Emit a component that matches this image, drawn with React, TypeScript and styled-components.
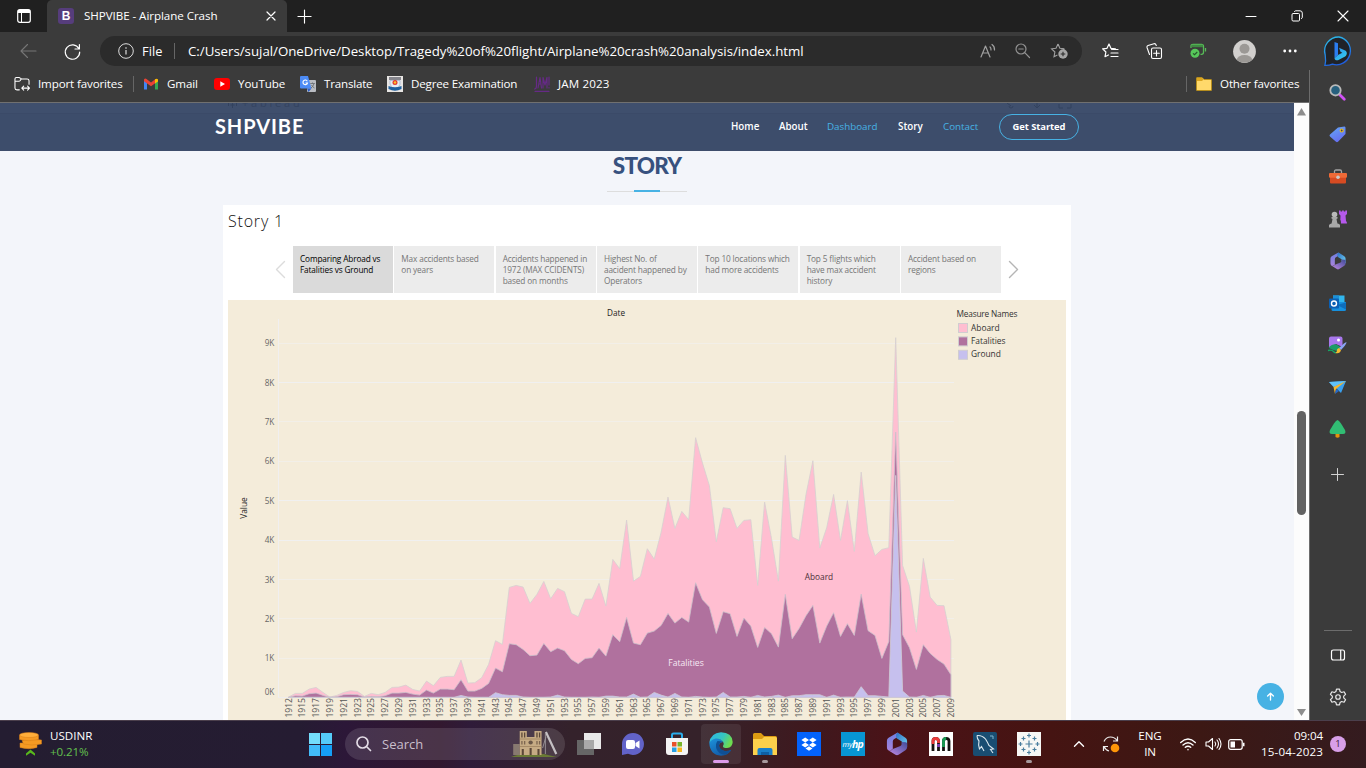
import React from 'react';
import styled, { createGlobalStyle } from 'styled-components';

const GlobalStyle = createGlobalStyle`
  * { box-sizing: border-box; }
  html, body { margin: 0; padding: 0; }
  body { width: 1366px; height: 768px; overflow: hidden; font-family: "Open Sans", "Noto Sans", sans-serif; }
  svg { display: block; flex: none; overflow: visible; }
`;

/* ---------- chart data, years 1912-2009 (1913 has no record) ---------- */
const ABOARD = [
  1, 12, 12, 25, 30, 15, 1, 6, 15, 20, 18, 3, 12, 8, 15, 30, 31, 37, 24, 19, 49, 35, 60, 63, 63, 112, 43, 44, 59, 99,
  170, 159, 330, 336, 331, 282, 309, 348, 296, 327, 317, 252, 242, 295, 295, 342, 274, 414, 386, 532, 349, 363, 446,
  415, 495, 601, 507, 558, 533, 779, 703, 635, 467, 569, 566, 507, 531, 533, 336, 586, 477, 349, 726, 481, 471, 609,
  710, 448, 509, 609, 471, 590, 438, 676, 491, 425, 444, 449, 1079, 396, 333, 196, 417, 301, 276, 275, 174,
];
const FATALITIES = [
  0, 5, 4, 11, 13, 6, 0, 2, 8, 9, 8, 1, 3, 2, 5, 13, 13, 15, 10, 7, 22, 13, 25, 25, 23, 53, 19, 19, 27, 42, 88, 77, 161,
  158, 144, 125, 127, 162, 137, 148, 140, 114, 101, 117, 119, 148, 124, 188, 167, 240, 163, 158, 193, 199, 216, 252,
  223, 240, 226, 344, 293, 271, 192, 257, 251, 183, 238, 214, 150, 210, 191, 151, 309, 176, 207, 245, 276, 163, 214,
  254, 183, 221, 186, 310, 200, 186, 117, 168, 796, 188, 149, 84, 158, 132, 114, 100, 68,
];
const GROUND = [
  0, 0, 0, 0, 0, 0, 0, 0, 0, 0, 0, 0, 0, 0, 0, 0, 0, 0, 0, 0, 0, 0, 0, 0, 0, 6, 1, 0, 0, 0, 14, 8, 6, 6, 1, 0, 0, 0, 1,
  7, 1, 0, 0, 0, 1, 0, 4, 4, 1, 1, 10, 0, 1, 15, 7, 1, 12, 1, 0, 3, 1, 0, 1, 15, 1, 1, 3, 0, 6, 1, 3, 7, 0, 5, 5, 8, 8,
  8, 0, 7, 0, 1, 1, 32, 5, 5, 3, 1, 666, 19, 1, 0, 6, 0, 5, 6, 0,
];
const X0 = 60.5;
const STEP = 6.9;
const BASE = 397.4;
const px = (i: number) => X0 + i * STEP;

function areaPath(values: number[]) {
  const top = values.map((v, i) => `${px(i).toFixed(1)},${(BASE - v / 3).toFixed(1)}`).join(' L');
  return `M${px(0)},${BASE} L${top} L${px(values.length - 1).toFixed(1)},${BASE} Z`;
}
const YEARS = ['1912', ...Array.from({ length: 48 }, (_, k) => String(1915 + k * 2))];

/* ---------- window chrome ---------- */
const Screen = styled.div`
  width: 1366px; height: 768px; display: flex; flex-direction: column; background: #3b3b3b; color: #fff; overflow: hidden;
`;
const TitleBar = styled.div`height: 32px; display: flex; background: #202020; flex: none;`;
const Slot = styled.div<{ $w: number }>`
  width: ${p => p.$w}px; flex: none; display: flex; align-items: center; justify-content: center;
`;
const Tab = styled.div`
  width: 240px; background: #3b3b3b; border-radius: 5px 5px 0 0; display: flex; align-items: center; padding: 0 8px 0 11px;
`;
const Favicon = styled.div`
  width: 16px; height: 16px; border-radius: 3px; background: #563d7c; display: flex; align-items: center;
  justify-content: center; font: 700 12px/16px "Liberation Sans", sans-serif;
`;
const UiText = styled.span<{ $size?: number; $ls?: number; $color?: string }>`
  font-size: ${p => p.$size ?? 11.6}px; letter-spacing: ${p => p.$ls ?? -0.14}px; color: ${p => p.$color ?? '#fff'};
  white-space: nowrap; line-height: 16px;
`;
const TabTitle = styled(UiText)`margin-left: 10px; flex: 1;`;
const Spacer = styled.div`flex: 1;`;

const Toolbar = styled.div`height: 38px; display: flex; align-items: center; flex: none;`;
const Address = styled.div`
  width: 982px; height: 30px; border-radius: 15px; background: #2b2b2b; display: flex; align-items: center;
  padding: 0 3px 0 18px; flex: none;
`;
const FileLabel = styled(UiText)`width: 32px; margin-left: 8px;`;
const VLine = styled.div<{ $h: number; $ml?: number; $mr?: number }>`
  width: 1px; height: ${p => p.$h}px; background: #666; margin-left: ${p => p.$ml ?? 0}px; margin-right: ${p => p.$mr ?? 0}px;
`;

const Body = styled.div`flex: 1; display: flex; min-height: 0;`;
const Main = styled.div`width: 1309px; display: flex; flex-direction: column; flex: none;`;
const Favorites = styled.div`
  height: 33px; display: flex; align-items: center; padding: 0 0 4px 14px; border-bottom: 1px solid #707070; flex: none;
`;
const Bookmark = styled.div<{ $w: number }>`width: ${p => p.$w}px; display: flex; align-items: center; gap: 8px; flex: none;`;

/* ---------- web page ---------- */
const Viewport = styled.div`flex: 1; display: flex; min-height: 0;`;
const Page = styled.div`
  width: 1294px; background: #f3f5fa; display: flex; flex-direction: column; position: relative; overflow: hidden;
`;
const Nav = styled.header`
  height: 48px; background: linear-gradient(#3f4f6d 0 10px, #3b4a68 10px 11px, #3d4d6b 11px); display: flex;
  align-items: center; padding: 0 215px; flex: none; position: relative;
`;
const Ghost = styled.div`
  position: absolute; left: 0; top: 0; width: 100%; height: 6px; overflow: hidden; color: #33425e;
`;
const GhostText = styled.div`
  margin: -8px 0 0 242px; font-size: 11px; line-height: 15px; letter-spacing: 2.8px; opacity: 0.85;
`;
const GhostIcons = styled.svg<{ $x: number }>`position: absolute; left: ${p => p.$x}px; top: 0;`;
const Brand = styled.div`font: 700 20px/24px Lato, sans-serif; letter-spacing: 0.9px; width: 516px; padding-bottom: 3px;`;
const NavLink = styled.a<{ $w: number; $active?: boolean }>`
  width: ${p => p.$w}px; font-size: 9.8px; font-weight: ${p => (p.$active ? 500 : 600)}; line-height: 14px;
  color: ${p => (p.$active ? '#47b2e4' : '#fff')}; white-space: nowrap; flex: none; padding-bottom: 0;
`;
const StartButton = styled.a`
  width: 80px; height: 26px; border: 1.4px solid #47b2e4; border-radius: 13px; flex: none; font-size: 9.4px;
  font-weight: 700; line-height: 24px; text-align: center; white-space: nowrap; letter-spacing: -0.05px;
`;
const Heading = styled.h2`
  margin: 0; height: 39px; font: 900 22.5px/30px Lato, sans-serif; color: #37517e; text-align: center; letter-spacing: -0.8px;
  flex: none;
`;
const Underline = styled.div`
  width: 80px; height: 2px; margin: 0 auto; display: flex; justify-content: center;
  background: linear-gradient(transparent 50%, #dddddd 50%); flex: none;
`;
const Accent = styled.div`width: 26px; height: 2px; background: #47b2e4;`;
const Card = styled.section`
  width: 848px; flex: 1; margin: 13px 0 0 223px; padding: 0 5px; background: #fff; display: flex; flex-direction: column;
  font-family: "Open Sans", "Noto Sans", sans-serif;
`;
const StoryTitle = styled.div`height: 41px; font-size: 16px; line-height: 33px; color: #111; font-weight: 300; letter-spacing: 0.8px; flex: none;`;
const Points = styled.div`height: 47px; display: flex; align-items: stretch; flex: none;`;
const Arrow = styled.div<{ $left?: boolean }>`
  width: ${p => (p.$left ? 65 : 17)}px; display: flex; align-items: center; justify-content: flex-end;
`;
const PointList = styled.div`display: flex; gap: 1.33px;`;
const Point = styled.div<{ $on?: boolean }>`
  width: 100px; padding: 7px 0 0 7px; font-size: 8.25px; line-height: 11px; white-space: pre; letter-spacing: -0.14px;
  background: ${p => (p.$on ? '#dadada' : '#ececec')}; color: ${p => (p.$on ? '#000' : '#767676')};
`;
const Chart = styled.svg`margin-top: 7px; background: #f4ecda; font-family: "Open Sans", sans-serif;`;
const ToTop = styled.div`
  position: absolute; right: 10px; bottom: 10px; width: 27px; height: 27px; border-radius: 50%; background: #47b2e4;
  display: flex; align-items: center; justify-content: center;
`;
const ScrollTrack = styled.div`width: 15px; background: #fcfcfc; display: flex; flex-direction: column; align-items: center; padding-top: 5px;`;
const Thumb = styled.div`width: 9px; height: 104px; border-radius: 5px; background: #626262; margin: 295px 0 0;`;

const Side = styled.aside`
  width: 57px; border-left: 1px solid #6c6c6c; display: flex; flex-direction: column; align-items: center; padding: 1px 1px 0 0;
`;
const SideItem = styled.div<{ $h?: number }>`height: ${p => p.$h ?? 42}px; display: flex; align-items: center; flex: none;`;
const SideRule = styled.div`width: 28px; height: 1px; background: #6c6c6c;`;

/* ---------- taskbar ---------- */
const Taskbar = styled.footer`
  height: 48px; flex: none; display: flex; align-items: center; border-top: 1px solid #4b3f4c; padding-bottom: 1px;
  background: linear-gradient(90deg, #241d31 0, #251c32 300px, #2c1738 345px, #32182f 440px, #2f1b39 470px, #34222b 570px,
    #35222a 700px, #40181d 820px, #4b1217 900px, #451412 1050px, #3c1814 1200px, #341b1f 1366px);
`;
const Widget = styled.div`width: 309px; padding-left: 19px; display: flex; align-items: center; gap: 8px; flex: none;`;
const Stack = styled.div<{ $align?: string }>`display: flex; flex-direction: column; align-items: ${p => p.$align ?? 'flex-start'};`;
const Start = styled.div`width: 23px; height: 23px; display: grid; grid-template-columns: 1fr 1fr; gap: 1px; flex: none;`;
const Pane = styled.div<{ $c: string }>`background: ${p => p.$c};`;
const SearchBox = styled.div`
  width: 220px; height: 32px; margin: 0 2px 0 13px; border-radius: 16px; background: rgba(255, 255, 255, 0.12);
  display: flex; align-items: center; padding: 0 6px 0 11px; gap: 10px; flex: none;
`;
const AppSlot = styled.div<{ $active?: boolean }>`
  width: 40px; height: 40px; margin: 0 2px; border-radius: 4px; display: flex; align-items: center; justify-content: center;
  flex: none; position: relative; background: ${p => (p.$active ? 'rgba(255,255,255,0.08)' : 'transparent')};
`;
const Dot = styled.i<{ $w: number; $c: string }>`
  position: absolute; bottom: 1px; left: calc(50% - ${p => p.$w / 2}px); width: ${p => p.$w}px; height: 3px;
  border-radius: 2px; background: ${p => p.$c};
`;
const Badge = styled.div`
  width: 16px; height: 16px; border-radius: 50%; background: #d89fe8; color: #3a2040; font-size: 9.5px; line-height: 16px;
  text-align: center; margin-left: 7px; flex: none;
`;
const Clock = styled(Stack)`width: 71px; white-space: nowrap; flex: none;`;

/* ---------- icons ---------- */
const Line = ({ d, s = 16, c = '#fff', w = 1.2, vb = 16 }: { d: string; s?: number; c?: string; w?: number; vb?: number }) => (
  <svg width={s} height={s} viewBox={`0 0 ${vb} ${vb}`} fill="none" stroke={c} strokeWidth={w} strokeLinecap="round" strokeLinejoin="round">
    <path d={d} />
  </svg>
);
const STAR = 'M7 1 L8.9 5.3 L13.4 5.8 M7 1 L5 5.3 L0.6 5.8 L3.9 9 L3 13.7 L6.4 12';

const BingIcon = () => (
  <svg width="30" height="31" viewBox="0 0 30 31">
    <defs>
      <linearGradient id="bi" x1="0" y1="0" x2="0.4" y2="1"><stop offset="0" stopColor="#2cc3ea" /><stop offset="1" stopColor="#1f5fe0" /></linearGradient>
      <linearGradient id="bb" x1="0" y1="0" x2="1" y2="1"><stop offset="0" stopColor="#2d8cf0" /><stop offset="1" stopColor="#35d5ee" /></linearGradient>
    </defs>
    <path d="M15 1a14 14 0 1 1-6.5 27.2C6.500 29 4 29.600 0.900 29.400C1.800 26.500 1.800 23 1.200 19A14 14 0 0 1 15 1Z" fill="#202329" stroke="url(#bi)" strokeWidth="1.3" />
    <path d="M10.500 6l3.500 1.300v11.700l-3.500 3Z" fill="#2b7cf0" />
    <path d="M10.500 22l3.500-3 4.300-2.300-1.800-.9-1.500-4 6.700 3c1.800 1.800 1.300 4.500-.6 5.700L14 24.200c-1.700.6-3.500-.4-3.500-2.200Z" fill="url(#bb)" />
  </svg>
);
const M365 = ({ s = 18 }: { s?: number }) => (
  <svg width={s} height={s} viewBox="0 0 20 20">
    <defs>
      <linearGradient id="m1" x1="0" y1="0" x2="0" y2="1"><stop stopColor="#6f7fe0" /><stop offset="1" stopColor="#a883dc" /></linearGradient>
      <linearGradient id="m2" x1="0" y1="0" x2="1" y2="1"><stop stopColor="#2f6fc4" /><stop offset="1" stopColor="#6fd3f2" /></linearGradient>
      <linearGradient id="m3" x1="1" y1="0" x2="0" y2="1"><stop stopColor="#3f4a98" /><stop offset="1" stopColor="#c48ce6" /></linearGradient>
    </defs>
    <path d="M10.500 0.500L3 4.700Q1.600 5.600 1.600 7.200V12.800Q1.600 15.600 4.200 15.600L6.500 14.200V8Q6.500 6.600 7.700 5.900L11 4Z" fill="url(#m1)" />
    <path d="M10.500 0.500Q9 1.700 9.200 3.700Q9.300 5 10.300 5.700L14 8V10.500L18.400 12.500V7.200Q18.400 5.600 17 4.700L11.500 1Z" fill="url(#m2)" />
    <path d="M18.400 9.500V12.800Q18.400 14.400 17 15.200L11.300 19Q10 19.800 8.700 19L3 15.400Q5 15.900 6.500 14.200L12.800 11.600Q14 11 14 9.700V8.300Q18.400 8.300 18.400 9.500Z" fill="url(#m3)" />
  </svg>
);

const Legend = [['Aboard', '#ffbed1'], ['Fatalities', '#b0719e'], ['Ground', '#c6c0ee']];
const POINTS = [
  'Comparing Abroad vs\nFatalities vs Ground', 'Max accidents based\non years', 'Accidents happened in\n1972 (MAX CCIDENTS)\nbased on months',
  'Highest No. of\naacident happened by\nOperators', 'Top 10 locations which\nhad more accidents', 'Top 5 flights which\nhave max accident\nhistory',
  'Accident based on\nregions',
];
const gridY = (k: number) => Math.round(397.2 - k * 39.4);

function StoryChart() {
  return (
    <Chart width="838" height="420" viewBox="0 0 838 420">
      {Array.from({ length: 9 }, (_, k) => k + 1).map(k => (
        <g key={k}>
          <rect x="50" y={gridY(k)} width="676" height="1" fill={[4, 5, 8].includes(k) ? '#f0f0f0' : '#f2efe8'} />
          <text x="46" y={400.8 - k * 39.4} fontSize="8.2" textAnchor="end" fill="#666" letterSpacing="-0.2">{k}K</text>
        </g>
      ))}
      <text x="46" y="395.3" fontSize="8.2" textAnchor="end" fill="#666" letterSpacing="-0.2">0K</text>
      <rect x="50" y="19" width="1" height="379" fill="#f0eff0" />
      <rect x="50" y="397" width="676" height="1" fill="#eeecec" />
      <path d={areaPath(ABOARD)} fill="#ffbed1" stroke="#d6d0d1" strokeWidth="0.8" />
      <path d={areaPath(FATALITIES)} fill="#b0719e" stroke="#ccc2cb" strokeWidth="0.8" />
      <path d={areaPath(GROUND)} fill="#c6c0ee" stroke="#cfcbd4" strokeWidth="0.8" />
      {YEARS.map((y, k) => (
        <text key={y} transform={`translate(${px(k * 2) + 3},417.500) rotate(-90)`} fontSize="8.6" fill="#555" letterSpacing="-0.1">{y}</text>
      ))}
      <text x="388" y="16" fontSize="8.200" textAnchor="middle" fill="#222" fontWeight="500">Date</text>
      <text transform="translate(19,208) rotate(-90)" fontSize="8.400" textAnchor="middle" fill="#222" fontWeight="500">Value</text>
      <text x="591" y="279.500" fontSize="8.300" textAnchor="middle" fill="#4b3038">Aboard</text>
      <text x="458" y="365.500" fontSize="8.600" textAnchor="middle" fill="#f7e9f4">Fatalities</text>
      <text x="728.500" y="17" fontSize="8.300" fill="#333" fontWeight="500" letterSpacing="-0.18">Measure Names</text>
      {Legend.map(([name, color], k) => (
        <g key={name}>
          <rect x="730.500" y={23.5 + k * 13.4} width="9" height="9" fill={color} stroke="#d0cdd0" />
          <text x="743" y={31 + k * 13.2} fontSize="8.400" fill="#333" letterSpacing="-0.02">{name}</text>
        </g>
      ))}
    </Chart>
  );
}

function Chrome() {
  return (
    <>
      <TitleBar>
        <Slot $w={47}>
          <svg width="14" height="14" viewBox="0 0 14 14"><rect x="0.700" y="0.700" width="12.600" height="12.600" rx="2" fill="none" stroke="#fff" strokeWidth="1.200" /><path d="M1 1h12v3H1Z" fill="#fff" /><path d="M4.500 4v9" stroke="#fff" /></svg>
        </Slot>
        <Tab>
          <Favicon>B</Favicon>
          <TabTitle $ls={-0.06}>SHPVIBE - Airplane Crash</TabTitle>
          <Line d="M4 4l8 8M12 4l-8 8" s={16} w={1.2} />
        </Tab>
        <Slot $w={35}><Line d="M8 1v14M1 8h14" w={1.2} s={15} /></Slot>
        <Spacer />
        <Slot $w={46}><Line d="M3 8.500h10" w={1} /></Slot>
        <Slot $w={46}><Line d="M3 6.500q0-1 1-1h5.500q1 0 1 1V12q0 1-1 1H4q-1 0-1-1ZM5.500 3.500q.3-.7 1-.7h4.500q2.300 0 2.300 2.300v4.400q0 .8-.8 1" w={1} /></Slot>
        <Slot $w={46}><Line d="M3 3l10 10M13 3L3 13" w={1.1} /></Slot>
      </TitleBar>
      <Toolbar>
        <Slot $w={56}><Line d="M16 8H1M7.500 1.500L1 8l6.500 6.500" c="#767676" vb={17} s={17} w={1.1} /></Slot>
        <Slot $w={32}><Line d="M14.800 5.500A7.200 7.200 0 1 0 15.700 9M15.400 1.500V6H11" vb={17} s={17} w={1.2} /></Slot>
        <Slot $w={12} />
        <Address>
          <svg width="16" height="16" viewBox="0 0 16 16" fill="none" stroke="#ddd"><circle cx="8" cy="8" r="7.300" /><path d="M8 7v4.500M8 4.300v1.400" strokeWidth="1.200" /></svg>
          <FileLabel $size={12.8} $ls={0.05}>File</FileLabel>
          <VLine $h={16} $mr={13} />
          <UiText $size={13.3} $ls={-0.03}>C:/Users/sujal/OneDrive/Desktop/Tragedy%20of%20flight/Airplane%20crash%20analysis/index.html</UiText>
          <Spacer />
          <Slot $w={36}><Line d="M1 14L5.500 3L10 14M2.700 10h5.600M10 4q1.200 1 1 3M12 1.500q2.800 2 2.500 5.500" c="#a0a0a0" /></Slot>
          <Slot $w={34}><Line d="M11 6a5 5 0 1 1-10 0a5 5 0 0 1 10 0M10 9.800L14.500 14.500M3.800 6h4.400" c="#929292" /></Slot>
          <Slot $w={39}>
            <svg width="17" height="16" viewBox="0 0 17 16"><path d={STAR + 'M13.400 5.800L12 7.200'} fill="none" stroke="#a0a0a0" strokeWidth="1.100" /><circle cx="12" cy="11" r="4.700" fill="#a6a6a6" /><path d="M12 8.700v4.600M9.700 11h4.600" stroke="#2b2b2b" strokeWidth="1.100" /></svg>
          </Slot>
        </Address>
        <Slot $w={56}><Line d={STAR + 'M9.500 6.500h6.500M9 10h7M9 13.500h7'} s={17} vb={17} w={1.2} /></Slot>
        <Slot $w={32}><Line d="M5.500 6.500q0-1.500 1.500-1.500H14q1.500 0 1.500 1.500V14q0 1.500-1.500 1.500H7q-1.500 0-1.500-1.500ZM10.500 7.500v5.500M7.700 10.200h5.600M3.500 11.500L1 4.500Q.6 3 2 2.500L8 .7Q9.500.3 10.300 2.500" s={17} vb={17} w={1.1} /></Slot>
        <Slot $w={56}>
          <svg width="17" height="16" viewBox="0 0 17 16"><path d="M1 5V3Q1 1.300 3 1.300h8.500q2 0 2 2v6q0 2-2 2h-1M15.500 5v3.500" fill="none" stroke="#57b957" strokeWidth="1.300" /><path d="M1.500 1.800h11.500v2.400H1.500Z" fill="#3f8a42" /><circle cx="5" cy="10.200" r="4.500" fill="#57c75a" /><path d="M3 10.300l1.500 1.400L7.300 9" fill="none" stroke="#24552a" strokeWidth="1.100" /></svg>
        </Slot>
        <Slot $w={36}>
          <svg width="23" height="23" viewBox="0 0 23 23"><defs><clipPath id="av"><circle cx="11.500" cy="11.500" r="11.200" /></clipPath></defs><circle cx="11.500" cy="11.500" r="11.400" fill="#d2d0ce" /><circle cx="11.500" cy="8.700" r="5" fill="#9b9895" /><ellipse cx="11.500" cy="20" rx="7.700" ry="5" fill="#9b9895" clipPath="url(#av)" /></svg>
        </Slot>
        <Slot $w={56}><svg width="14" height="4" fill="#fff"><circle cx="1.700" cy="2" r="1.400" /><circle cx="7" cy="2" r="1.400" /><circle cx="12.300" cy="2" r="1.400" /></svg></Slot>
        <Slot $w={42}><BingIcon /></Slot>
      </Toolbar>
    </>
  );
}

function FavoritesBar() {
  return (
    <Favorites>
      <Bookmark $w={119}>
        <Line d="M5.500 14.300H3Q1 14.300 1 12.300V3Q1 1.500 2.500 1.500H5Q6 1.500 6.500 2.300Q7 3 8 3H13.500Q15.500 3 15.500 5V8.500M1 5.500H5Q6 5.500 6.500 4.500L7.500 3M8 12.500H16M10 10.500L8 12.500L10 14.500M14 10.500L16 12.500L14 14.500" w={1.1} vb={16.5} />
        <UiText>Import favorites</UiText>
      </Bookmark>
      <VLine $h={16} $mr={9} />
      <Bookmark $w={71}>
        <svg width="16" height="12" viewBox="0 0 16 12"><path d="M1 2v9.500h3V5Z" fill="#4285f4" /><path d="M12 5v6.500h3V2Z" fill="#34a853" /><path d="M1 1.500Q2 0 3.500 1L8 4.600 12.500 1 12.500 5 8 8.300 1 3.300Z" fill="#ea4335" /><path d="M12 1.200Q14 0 15 1.500V3.500L12 5.500Z" fill="#fbbc04" /></svg>
        <UiText>Gmail</UiText>
      </Bookmark>
      <Bookmark $w={86}>
        <svg width="16" height="12" viewBox="0 0 16 12"><rect width="16" height="12" rx="3" fill="#f00" /><path d="M6.300 3.300L11 6L6.300 8.700Z" fill="#fff" /></svg>
        <UiText $ls={-0.05}>YouTube</UiText>
      </Bookmark>
      <Bookmark $w={87}>
        <svg width="16" height="16" viewBox="0 0 16 16"><rect x="7" y="4" width="9" height="12" rx="1" fill="#b9bcc2" /><path d="M1 0H8L11.500 12.500H1Q0 12.500 0 11.500V1Q0 0 1 0Z" fill="#4c8bf5" /><path d="M7 12.500h4.500L8.500 16Z" fill="#2c5fc9" /><path d="M7.300 5.200A2.300 2.300 0 1 0 7.500 7H5.500" fill="none" stroke="#fff" strokeWidth="1.100" /><path d="M10.300 7.500h4.500M12.500 6.500v1M14 7.500q-.7 3-3 4.500M11.500 9q1 2 3 3" fill="none" stroke="#6b7076" strokeWidth="0.900" /></svg>
        <UiText $ls={-0.2}>Translate</UiText>
      </Bookmark>
      <Bookmark $w={147}>
        <svg width="16" height="16" viewBox="0 0 16 16"><rect width="16" height="16" fill="#e8e6e4" /><path d="M2 1h12v3H2Z" fill="#85858c" /><path d="M3 4.500h10v4Q12 12 8 13Q4 12 3 8Z" fill="#e3ecf4" stroke="#8ea2c9" strokeWidth="0.600" /><circle cx="8" cy="6.500" r="2.500" fill="#e23b2e" /><circle cx="8" cy="6.500" r="1.200" fill="#f9c22d" /><path d="M1.500 10Q8 12.500 14.500 10V13Q8 16.500 1.500 13Z" fill="#1d5f9e" /></svg>
        <UiText $ls={-0.17}>Degree Examination</UiText>
      </Bookmark>
      <Bookmark $w={90}>
        <Line d="M2.500 1v9q0 3-2 3M4 12L6 1.500L7.500 12M5 8h2M9 12V1.500L11 9L13 1.500V12M15 1v8M15 11.500v.5M1 15.300h14" c="#662a86" w={1.2} />
        <UiText $ls={0.15}>JAM 2023</UiText>
      </Bookmark>
      <Spacer />
      <VLine $h={16} $mr={9} />
      <Bookmark $w={113}>
        <svg width="16" height="14" viewBox="0 0 16 14"><path d="M.5 3V1.200Q.5.500 1.200.500H6L8 2.500H15q.5 0 .5.700V13q0 .5-.5.500H1q-.5 0-.5-.5Z" fill="#ffd96b" stroke="#b98d17" strokeWidth="0.900" /><path d="M1 1H6L7.500 2.600L6 4H1Z" fill="#dba520" /></svg>
        <UiText>Other favorites</UiText>
      </Bookmark>
    </Favorites>
  );
}

function WebPage() {
  return (
    <Page>
      <Nav>
        <Ghost>
          <GhostText>+ableau</GhostText>
          <GhostIcons $x={227} width="12" height="6" fill="none" stroke="#33425e"><path d="M5.500 0v5M3.500 2h4M1.500 0v3M9.500 0v3" /></GhostIcons>
          <GhostIcons $x={1006} width="70" height="6" fill="none" stroke="#33425e"><path d="M1 0l4 3M3 3a2 2 0 1 0 4 0M31 0v5M28 2l3 3 3-3M53 1v4h4M65 1v4h-4" /></GhostIcons>
        </Ghost>
        <Brand>SHPVIBE</Brand>
        <NavLink $w={48}>Home</NavLink>
        <NavLink $w={48}>About</NavLink>
        <NavLink $w={71} $active>Dashboard</NavLink>
        <NavLink $w={45}>Story</NavLink>
        <NavLink $w={56} $active>Contact</NavLink>
        <StartButton>Get Started</StartButton>
      </Nav>
      <Heading>STORY</Heading>
      <Underline><Accent /></Underline>
      <Card>
        <StoryTitle>Story 1</StoryTitle>
        <Points>
          <Arrow $left><Line d="M8.500 0.500L0.500 8.500L8.500 16.500" c="#dcdcdc" w={1.4} vb={17} s={17} /></Arrow>
          <PointList>
            {POINTS.map((t, i) => <Point key={t} $on={i === 0}>{t}</Point>)}
          </PointList>
          <Arrow><Line d="M8.500 0.500L16.500 8.500L8.500 16.500" c="#b5b5b5" w={1.4} vb={17} s={17} /></Arrow>
        </Points>
        <StoryChart />
      </Card>
      <ToTop><Line d="M5 9V1.500M1.800 4.500L5 1.300L8.200 4.500" vb={10} s={9} w={1.5} /></ToTop>
    </Page>
  );
}

function EdgeSidebar() {
  return (
    <Side>
      <SideItem><svg width="17" height="17" viewBox="0 0 17 17"><path d="M10.500 10.500L15.300 15.300" stroke="#d052f5" strokeWidth="2.800" strokeLinecap="round" /><circle cx="6.500" cy="6.300" r="5.200" fill="#27607e" stroke="#b9b9b9" strokeWidth="1.800" /></svg></SideItem>
      <SideItem><svg width="17" height="17" viewBox="0 0 17 17"><defs><linearGradient id="tg" x1="0" y1="0" x2="0.500" y2="1"><stop stopColor="#63a9f7" /><stop offset="1" stopColor="#666ff2" /></linearGradient></defs><path d="M9 1.500L15.500.500Q16.700.500 16.500 2V8L9 15.800Q8 16.700 7 15.800L1 10.500Q0 9.500 1 8.500Z" fill="url(#tg)" /><circle cx="12.700" cy="4.500" r="1.500" fill="#445" stroke="#e8bd1d" strokeWidth="1.200" /></svg></SideItem>
      <SideItem $h={43}><svg width="18" height="15" viewBox="0 0 18 15"><path d="M5.500 4V2.500Q5.500 1 7 1H11Q12.500 1 12.500 2.500V4" fill="none" stroke="#a5a5a5" strokeWidth="1.300" /><rect x="1" y="7" width="16" height="7.500" rx="1" fill="#d64b22" /><rect y="4" width="18" height="4.700" rx="1" fill="#ee6a37" /><circle cx="9" cy="8.300" r="1.800" fill="#cacaca" /></svg></SideItem>
      <SideItem><svg width="18" height="18" viewBox="0 0 18 18"><circle cx="5.500" cy="4.500" r="2.800" fill="#b9b9b9" /><path d="M2.500 7h6v1.500L7.500 9l1 5H2.500l1-5-1-.5ZM0 15q1-1.500 2.500-1.500h6Q10.500 13.500 11 15v2.500H0Z" fill="#a8a8a8" /><path d="M10 .5h1.600v1h1.500v-1h1.700v1h1.500v-1H18V4l-1.500 1.500L17 11q1 .5 1 2.500H12Q12 10 11.300 10L11.500 5.500 10 4Z" fill="#b559ec" /></svg></SideItem>
      <SideItem><M365 /></SideItem>
      <SideItem><svg width="17" height="16" viewBox="0 0 17 16"><path d="M4 .5H15.500V9H4Z" fill="#31b6ee" /><path d="M4 .5h6v5H4Z" fill="#1b8fd8" /><path d="M2.500 7H17V14.500Q17 16 15.500 16H4Q2.500 16 2.500 14.500Z" fill="#1690de" /><path d="M17 7.500V14.500L8 10Z" fill="#0e6dbb" /><rect y="3.500" width="10" height="10" rx="1" fill="#0b60b4" /><circle cx="5" cy="8.500" r="2.500" fill="none" stroke="#fff" strokeWidth="1.400" /></svg></SideItem>
      <SideItem><svg width="19" height="18" viewBox="0 0 19 18"><path d="M3 .5H12.500Q14.500.500 14.500 2.500V11L8 8 1 12V2.500Q1 .5 3 .5Z" fill="#a877ec" /><circle cx="10.500" cy="4" r="1.500" fill="#fff" /><path d="M1 11Q7 5 13 12L9 15Q4 14 1 12Z" fill="#1b9c67" /><path d="M0 14.500Q4 13.500 5.500 15.500T9 16" fill="none" stroke="#16a765" strokeWidth="1.400" /><path d="M18.500 6Q17 6 11 12l2 2Q18.500 8.500 18.500 6Z" fill="#8aa4f4" /><path d="M11 12l2 2Q12 18 7.500 17Q9.500 15.500 9 13.500Q10 12 11 12Z" fill="#f5ba2e" /></svg></SideItem>
      <SideItem><svg width="17" height="15" viewBox="0 0 17 15"><path d="M0 2L17 1 12 13 8 9Z" fill="#3aa0ee" /><path d="M0 2L17 1 4.500 7Z" fill="#5fc2fa" /><path d="M4.500 7L17 1 7 9 6 14Z" fill="#f5b62c" /><path d="M7 9l3 2-4 3Z" fill="#2467c9" /></svg></SideItem>
      <SideItem><svg width="17" height="18" viewBox="0 0 17 18"><path d="M6.500 13h4v4q-2 1.500-4 0Z" fill="#e4930c" /><path d="M8.500 0Q9.800.3 12 3.500L16 10Q17.500 14 14 14H3Q-.5 14 1 10L5 3.500Q7.200.3 8.500 0Z" fill="#31bd73" /></svg></SideItem>
      <SideItem $h={49}><Line d="M6.500.5v12M.5 6.500h12" s={13} vb={13} c="#d2d2d2" w={1} /></SideItem>
      <Spacer />
      <SideRule />
      <SideItem $h={49}><Line d="M2.500 1h9q2 0 2 2v6q0 2-2 2h-9q-2 0-2-2V3q0-2 2-2ZM9.700 1v10" s={14} vb={14} w={1.2} /></SideItem>
      <SideItem $h={34}><svg width="18" height="18" viewBox="0 0 24 24" fill="none" stroke="#e8e8e8" strokeWidth="1.600"><circle cx="12" cy="12" r="3" /><path d="M10 1.500h4l.8 3.300 2 1.200 3.300-1 2 3.500-2.500 2.300v2.400l2.500 2.300-2 3.500-3.300-1-2 1.200L14 22.500h-4l-.8-3.300-2-1.200-3.300 1-2-3.500 2.500-2.300v-2.400L1.900 8.500l2-3.500 3.300 1 2-1.200Z" strokeLinejoin="round" /></svg></SideItem>
      <SideItem $h={6} />
    </Side>
  );
}

const I = ({ children }: { children: React.ReactNode }) => <svg width="24" height="24" viewBox="0 0 24 24">{children}</svg>;

function WindowsBar() {
  return (
    <Taskbar>
      <Widget>
        <svg width="23" height="24" viewBox="0 0 23 24"><g fill="#f59a23" stroke="#d67f18" strokeWidth="0.500"><path d="M1 11h17v4.500q-8 2.500-17 0Z" /><path d="M3 8.500q9-2 19.500-.5v4q-10 2-18 0Z" /><path d="M.5 3.500v4q9 2.500 19 0V3.500Z" /><ellipse cx="10" cy="3" rx="9.500" ry="2.500" fill="#ffae3a" /></g><path d="M11.500 17.500l4.500 4v2.200l-4.500-3-4.500 3v-2.200Z" fill="#58b81c" /></svg>
        <Stack><UiText $ls={0}>USDINR</UiText><UiText $color="#63c04e" $ls={-0.1}>+0.21%</UiText></Stack>
      </Widget>
      <Start><Pane $c="#74ddfb" /><Pane $c="#55cbfa" /><Pane $c="#42bcf9" /><Pane $c="#159ff7" /></Start>
      <SearchBox>
        <Line d="M12 6.500a5.500 5.500 0 1 1-11 0a5.500 5.500 0 0 1 11 0M10.500 10.500L14.500 14.500" c="#e3dce6" w={1.7} />
        <UiText $size={13} $color="#c9bfcc" $ls={0}>Search</UiText>
        <Spacer />
        <svg width="48" height="28" viewBox="0 0 44 28" preserveAspectRatio="none">
          <path d="M0 27Q10 22 30 24l12 3Z" fill="#6a7a35" />
          <path d="M2 25V14h6v11Z" fill="#887a70" />
          <path d="M8 1h6.500v6h7V1H28v24H8Z" fill="#c6ab84" />
          <path d="M10 2.500v5M12.500 2.500v5M23.800 2.500v5M26.200 2.500v5" stroke="#5b4738" strokeWidth="1.200" />
          <path d="M10.800 19v6M18 18v7M25.200 19v6" stroke="#5b4738" strokeWidth="1.900" />
          <path d="M10 11v3.500M12.500 11v3.500M23.800 11v3.500M26.200 11v3.500" stroke="#7d6650" strokeWidth="1.200" />
          <circle cx="18" cy="12.500" r="2" fill="#6b5848" />
          <path d="M8 9h20M8 16.500h20" stroke="#9f8460" strokeWidth="0.800" />
          <path d="M32 2L41.500 24" stroke="#c4c0c3" strokeWidth="2" />
          <path d="M31.500 3V24M29 18L32 7" stroke="#9a9499" strokeWidth="0.900" />
        </svg>
      </SearchBox>
      <AppSlot><I><path d="M7 1h17v16H7Z" fill="#e9e9e9" /><path d="M0 8h17v15H0Z" fill="#666" /><path d="M7 8h10v9H7Z" fill="#a9a9a9" /></I></AppSlot>
      <AppSlot><I><path d="M12 1a11 11 0 1 1-5 20.800L1 23V12A11 11 0 0 1 12 1Z" fill="#6263c8" /><rect x="5" y="8" width="9" height="9" rx="2" fill="#fff" /><path d="M14.500 11L18.500 8.500v8L14.500 14Z" fill="#fff" /></I></AppSlot>
      <AppSlot><I><path d="M7 7V3q0-1.500 1.500-1.500h7Q17 1.500 17 3V7" fill="none" stroke="#2badeb" strokeWidth="2" /><path d="M1 6h22v14q0 3-3 3H4q-3 0-3-3Z" fill="#f4f4f4" /><path d="M7 10h4.500v4.500H7Z" fill="#e8502a" /><path d="M12.500 10H17v4.500h-4.500Z" fill="#78b42a" /><path d="M7 15.500h4.500V20H7Z" fill="#279fe3" /><path d="M12.500 15.500H17V20h-4.500Z" fill="#f7b61d" /></I></AppSlot>
      <AppSlot $active>
        <I>
          <defs><linearGradient id="e1" x1="0" y1="0" x2="1" y2="0.400"><stop stopColor="#2bb5e8" /><stop offset="0.600" stopColor="#36c6c0" /><stop offset="1" stopColor="#6ddc50" /></linearGradient><linearGradient id="e2" x1="0" y1="0" x2="0.600" y2="1"><stop stopColor="#1d94dd" /><stop offset="1" stopColor="#125aa6" /></linearGradient></defs>
          <path d="M.3 11Q2 5 8.500 6Q13 7 14 10Q10 10.500 10 14Q10.500 18.500 15.500 19Q19.500 19.300 22.300 17.800Q19 23.700 12 23.700Q1 23 .3 11Z" fill="url(#e2)" />
          <path d="M8.500 9Q6 12 7.500 17Q9.500 22 15.500 22.700Q20.500 21.500 22.300 17.800Q18.500 19.800 14.500 18.500Q10 16.500 10 13Q10.500 10.500 13 9.500Z" fill="#0f4f94" />
          <path d="M.3 11Q1.500 1 12 .3Q23 .5 23.700 10Q23.500 15.500 18 16Q13.500 16 14 14Q15.500 12 14 9.500Q11 5.800 6.500 6.500Q2 7.500 .3 11Z" fill="url(#e1)" />
        </I>
        <Dot $w={16} $c="#dc9bea" />
      </AppSlot>
      <AppSlot><I><path d="M0 2.500Q0 1 1.500 1H8L11 4H22.500Q24 4 24 6v5H0Z" fill="#dd9b12" /><path d="M0 7h9l2-2h11.500Q24 5 24 6.500V23H0Z" fill="#fcd04b" /><path d="M4.500 23V18q0-2 2-2h11q2 0 2 2v5Z" fill="#197fca" /><path d="M8 20h8v3H8Z" fill="#0f5fa4" /></I><Dot $w={6} $c="#a7999d" /></AppSlot>
      <AppSlot><I><path d="M0 0h24v24H0Z" fill="#0362fb" /><path d="M8.200 5.500L12 8 8.200 10.500 4.400 8ZM15.800 5.500L19.600 8 15.800 10.500 12 8ZM8.200 10.500L12 13 8.200 15.500 4.400 13ZM15.800 10.500L19.600 13 15.800 15.500 12 13ZM12 14.200L15.500 16.500 12 18.800 8.500 16.500Z" fill="#fff" /></I></AppSlot>
      <AppSlot><I><path d="M0 0h24v24H0Z" fill="#0795d3" /><text x="1.500" y="15" fontSize="7.500" fontStyle="italic" fill="#fff" fontFamily="Open Sans, sans-serif">my</text><text x="11" y="16" fontSize="10.500" fontWeight="700" fontStyle="italic" fill="#fff" fontFamily="Open Sans, sans-serif" letterSpacing="-0.800">hp</text></I></AppSlot>
      <AppSlot><M365 s={24} /></AppSlot>
      <AppSlot><I><path d="M0 0h24v24H0Z" fill="#fff" /><g fill="none" strokeWidth="2.800"><path d="M4 19V9q0-2.500 2.700-2.500T9.500 9v10" stroke="#15120f" /><path d="M4 12V9q0-2.500 2.700-2.500T9.500 9v2" stroke="#ea3b3b" /><path d="M14.500 19V9q0-2.500 2.700-2.500T20 9v10" stroke="#141210" /><path d="M14.500 15V9q0-2.500 2.700-2.500" stroke="#1a9c54" /><path d="M9.500 12v3" stroke="#7f3fb6" /></g></I></AppSlot>
      <AppSlot><I><path d="M2 0h20q2 0 2 2v22H2q-2 0-2-2V2Q0 0 2 0Z" fill="#194d72" /><path d="M4 3.500Q9 3 12.500 7Q15 11 16 13.500L20.500 17L17.500 17.500L20 21M4 3.500Q4 7 6 9Q5 13 6.500 17L8.500 14.500L11 19" fill="none" stroke="#dce8ef" strokeWidth="1.100" /><path d="M17 4h3v3" fill="none" stroke="#7fb4ce" /></I></AppSlot>
      <AppSlot><I><path d="M0 0h24v24H0Z" fill="#f7f7f5" /><path d="M12 8.500v7M8.500 12h7M12 1.500v4M10 3.500h4M12 18.500v4M10 20.500h4M1.500 12h4M3.500 10v4M18.500 12h4M20.500 10v4M6.500 4.500v4M4.500 6.500h4M17.500 4.500v4M15.500 6.500h4M6.500 15.500v4M4.500 17.500h4M17.500 15.500v4M15.500 17.500h4" stroke="#4a7e9e" strokeWidth="1.200" /></I><Dot $w={6} $c="#a7999d" /></AppSlot>
      <Spacer />
      <Slot $w={30}><Line d="M3.500 10.300L8 5.800L12.500 10.300" w={1.4} /></Slot>
      <Slot $w={34}>
        <svg width="18" height="18" viewBox="0 0 18 18"><path d="M2 6.500Q4 2 8.500 2Q12.500 2 15 5.500M15.500 1.500V6H11M1.500 16V11.500H6M2 11.500Q3.500 15 7 16" fill="none" stroke="#eee" strokeWidth="1.200" /><circle cx="13" cy="13" r="4.300" fill="#ff9608" /></svg>
      </Slot>
      <Slot $w={44}><Stack $align="center"><UiText $ls={-0.1}>ENG</UiText><UiText>IN</UiText></Stack></Slot>
      <Slot $w={32}><Line d="M.7 6.500Q8 -.5 15.300 6.500M3 9Q8 4.300 13 9M5.300 11.300Q8 9 10.700 11.300M8 13.500v.2" w={1.4} /></Slot>
      <Slot $w={17}><Line d="M1 6h2.500L7.500 2.500v11L3.500 10H1ZM10 6q1.500 2 0 4M12 4q3 4 0 8M14 2.500q4 5.500 0 11" w={1.1} /></Slot>
      <Slot $w={31}><svg width="17" height="11" viewBox="0 0 17 11"><rect x=".7" y=".7" width="13.500" height="9.600" rx="2" fill="none" stroke="#fff" strokeWidth="1.200" /><path d="M2.500 2.500H7v6H2.500ZM15 3.800h1.500v3.400H15Z" fill="#fff" /></svg></Slot>
      <Clock $align="flex-end"><UiText $ls={-0.1}>09:04</UiText><UiText $ls={0.15}>15-04-2023</UiText></Clock>
      <Badge>1</Badge>
      <Slot $w={20} />
    </Taskbar>
  );
}

export default function App() {
  return (
    <Screen>
      <GlobalStyle />
      <Chrome />
      <Body>
        <Main>
          <FavoritesBar />
          <Viewport>
            <WebPage />
            <ScrollTrack>
              <svg width="9" height="8" viewBox="0 0 9 8"><path d="M4.500 0L9 7.500H0Z" fill="#8d8d8d" /></svg>
              <Thumb />
              <Spacer />
              <svg width="9" height="12" viewBox="0 0 9 12"><path d="M4.500 8L9 1H0Z" fill="#8d8d8d" /></svg>
            </ScrollTrack>
          </Viewport>
        </Main>
        <EdgeSidebar />
      </Body>
      <WindowsBar />
    </Screen>
  );
}
